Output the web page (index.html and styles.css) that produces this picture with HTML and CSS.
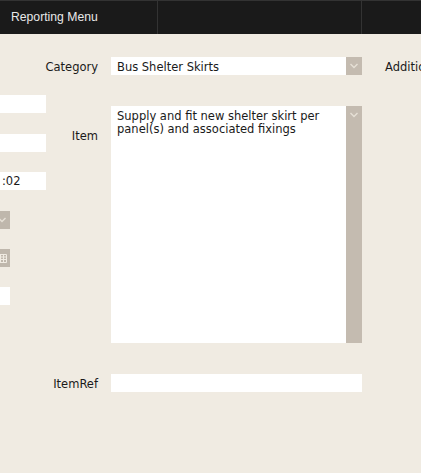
FILE: index.html
```html
<!DOCTYPE html>
<html lang="en">
<head>
<meta charset="utf-8">
<title>Reporting Menu</title>
<link rel="stylesheet" href="styles.css">
</head>
<body>

<!-- top bar -->
<div class="menubar">
  <div class="menuitem first">Reporting Menu</div>
  <div class="menuitem second"></div>
  <div class="menuitem"></div>
</div>

<div class="form">
  <!-- left column, mostly scrolled out of view -->
  <div class="col-left">
    <div class="field wide"></div>
    <div class="field wide"></div>
    <div class="field wide time">:02</div>
    <div class="btn">
      <svg width="10" height="6" viewBox="0 0 10 6"><path d="M1.5 1 L5 4.5 L8.5 1" fill="none" stroke="#e6e0d6" stroke-width="1.4"/></svg>
    </div>
    <div class="btn">
      <svg width="10" height="9" viewBox="0 0 10 9"><path d="M.5.5h9v8h-9zM.5 3h9M.5 5.5h9M3.5 .5v8M6.5 .5v8" fill="none" stroke="#f0ebe2" stroke-width="1"/></svg>
    </div>
    <div class="field narrow"></div>
  </div>

  <!-- middle column -->
  <div class="col-mid">
    <div class="row row-cat">
      <label class="lbl">Category</label>
      <div class="combo">
        <span class="combo-text">Bus Shelter Skirts</span>
        <span class="arrow">
          <svg width="10" height="6" viewBox="0 0 10 6"><path d="M1.5 1 L5 4.5 L8.5 1" fill="none" stroke="#e6e0d6" stroke-width="1.4"/></svg>
        </span>
      </div>
    </div>
    <div class="row row-item">
      <label class="lbl lbl-item">Item</label>
      <div class="combo tall">
        <span class="combo-text">Supply and fit new shelter skirt per panel(s) and associated fixings</span>
        <span class="arrow">
          <svg width="10" height="6" viewBox="0 0 10 6"><path d="M1.5 1 L5 4.5 L8.5 1" fill="none" stroke="#e6e0d6" stroke-width="1.4"/></svg>
        </span>
      </div>
    </div>
    <div class="row row-ref">
      <label class="lbl">ItemRef</label>
      <div class="field ref"></div>
    </div>
  </div>

  <!-- right column, cut off by the window -->
  <div class="col-right">
    <label class="lbl-right">Additional</label>
  </div>
</div>

</body>
</html>
```

FILE: styles.css
```css
*{box-sizing:border-box;margin:0;padding:0}
html,body{height:100%;overflow:hidden}
body{
  background:#f0ebe2;
  color:#1a1a1a;
  font-family:"DejaVu Sans",sans-serif;
  font-size:11.5px;
  line-height:13px;
}

/* --------- MENU --------- */
.menubar{
  display:flex;
  height:34px;
  background:#1a1a1a;
  border-top:1px solid #333;
}
.menuitem{
  width:158px;
  border-right:1px solid #333;
  flex:none;
}
.menuitem.first{
  padding:10px 0 0 11px;
  font-family:"Liberation Sans",sans-serif;
  font-size:12.2px;
  color:#e8e8e8;
}
.menuitem.second{width:204px}

/* --------- FORM --------- */
.form{
  display:flex;
  width:560px;
}
.field{background:#fff;height:18px}

.col-left{
  width:46px;
  flex:none;
  padding-top:61px;
  display:flex;
  flex-direction:column;
  align-items:flex-end;
}
.col-left .field.wide{width:100px;flex:none;margin-bottom:21px;align-self:flex-end}
.col-left .field.wide:nth-child(2){margin-bottom:20px}
.col-left .field.wide.time{padding:3px 0 0 56px;margin-bottom:21px}
.btn{
  width:18px;
  height:18px;
  margin-right:36px;
  margin-bottom:20px;
  padding-right:3px;
  background:#bfb7ac;
  display:flex;
  align-items:center;
  justify-content:flex-end;
  flex:none;
}
.col-left .field.narrow{width:60px;margin-right:36px}

.col-mid{
  width:316px;
  flex:none;
  padding-top:23px;
}
.row{display:flex}
.row-item{margin-top:31px}
.row-ref{margin-top:31px}
.lbl{
  display:flex;
  justify-content:flex-end;
  width:52px;
  flex:none;
  margin-right:13px;
  white-space:nowrap;
  padding-top:4px;
}
.lbl-item{padding-top:24px}
.combo{
  display:flex;
  width:251px;
  height:18px;
  background:#fff;
}
.combo.tall{height:237px}
.combo-text{flex:1;padding:4px 6px 0}
.arrow{
  width:16px;
  flex:none;
  background:#c4bbb0;
  display:flex;
  justify-content:center;
  padding-top:6px;
}
.field.ref{width:251px}

.col-right{padding:27px 0 0 23px}
.lbl-right{white-space:nowrap}
```
